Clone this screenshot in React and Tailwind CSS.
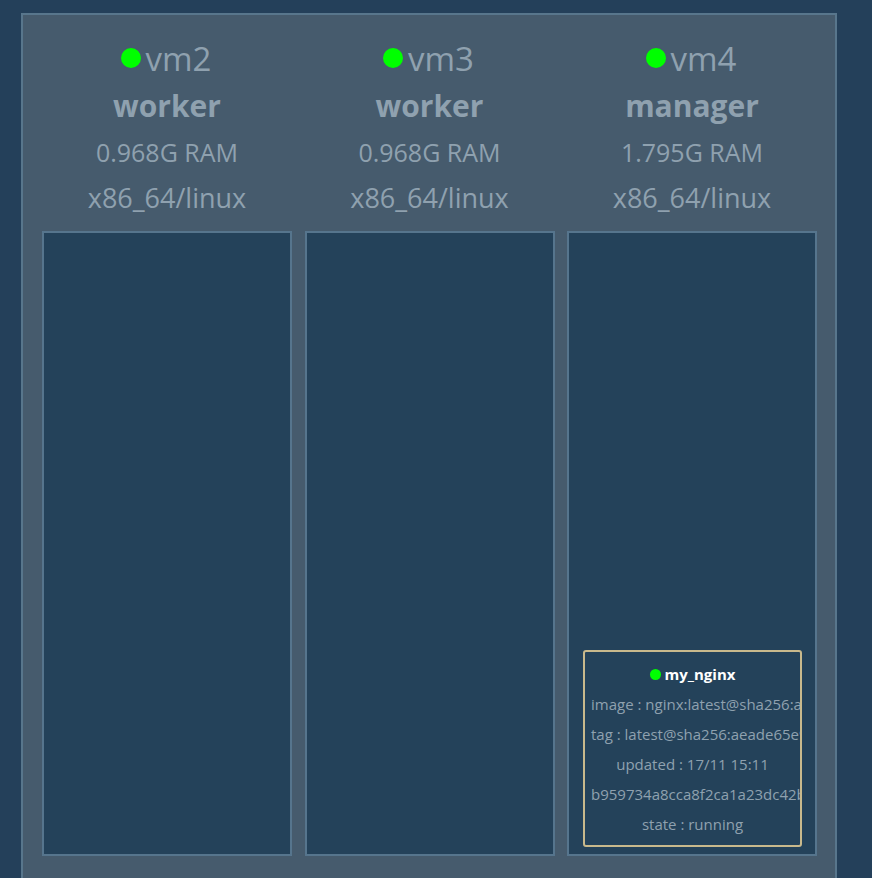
const NODES = [
  { name: 'vm2', role: 'worker', ram: '0.968G RAM', arch: 'x86_64/linux', tasks: [] },
  { name: 'vm3', role: 'worker', ram: '0.968G RAM', arch: 'x86_64/linux', tasks: [] },
  {
    name: 'vm4', role: 'manager', ram: '1.795G RAM', arch: 'x86_64/linux',
    tasks: [{
      name: 'my_nginx',
      lines: [
        'image : nginx:latest@sha256:aeade65e99e5d5e7ce162833636f692354c227ff438556e5f3ed0335b7cc2f1b',
        'tag : latest@sha256:aeade65e99e5d5e7ce162833636f692354c227ff438556e5f3ed0335b7cc2f1b',
        'updated : 17/11 15:11',
        'b959734a8cca8f2ca1a23dc42b8f1c2a5e6e1d1c7a7b7e6a',
        'state : running',
      ],
    }],
  },
]

function Task({ task }) {
  return (
    <div className="ml-[14px] mr-[13px] mb-[7px] border-2 border-[#c9b98c] rounded-[3px] px-[6px] pt-[7px] pb-[6px] overflow-hidden text-center">
      <div className="h-[30px] flex items-center justify-center gap-[4px] text-white font-bold text-[15px]">
        <span className="w-[11px] h-[11px] rounded-full bg-[#00ff00] shrink-0" />
        {task.name}
      </div>
      {task.lines.map(l => (
        <div key={l} className="h-[30px] leading-[30px] text-[15px] text-[#8fa1af] whitespace-nowrap">{l}</div>
      ))}
    </div>
  )
}

function Node({ node }) {
  return (
    <div className="flex flex-col">
      <div className="pt-[21px] mb-[11px] text-center text-[#8fa1af]">
        <div className="h-[46px] flex items-center justify-center text-[33px] pr-[2px]">
          <span className="w-5 h-5 rounded-full bg-[#00ff00] mr-[5px] mt-[-2px]" />
          {node.name}
        </div>
        <div className="h-[46px] flex items-center justify-center text-[30px] font-bold">{node.role}</div>
        <div className="h-[46px] flex items-center justify-center text-[25px] pt-[3px]">{node.ram}</div>
        <div className="h-[46px] flex items-center justify-center text-[27px] pt-[2px]">{node.arch}</div>
      </div>
      <div className="h-[625px] border-2 border-[#56758d] bg-[#24425a] flex flex-col justify-end">
        {node.tasks.map(t => <Task key={t.name} task={t} />)}
      </div>
    </div>
  )
}

export default function App() {
  return (
    <div className="w-[872px] h-[878px] overflow-hidden bg-[#24405a]" style={{ fontFamily: '"Open Sans", sans-serif' }}>
      <div className="ml-[21px] mt-[13px] w-[816px] h-[900px] border-2 border-[#58768c] bg-[#465b6d] pl-[19px]">
        <div className="grid grid-cols-[250px_250px_250px] gap-[12.5px]">
          {NODES.map(n => <Node key={n.name} node={n} />)}
        </div>
      </div>
    </div>
  )
}
